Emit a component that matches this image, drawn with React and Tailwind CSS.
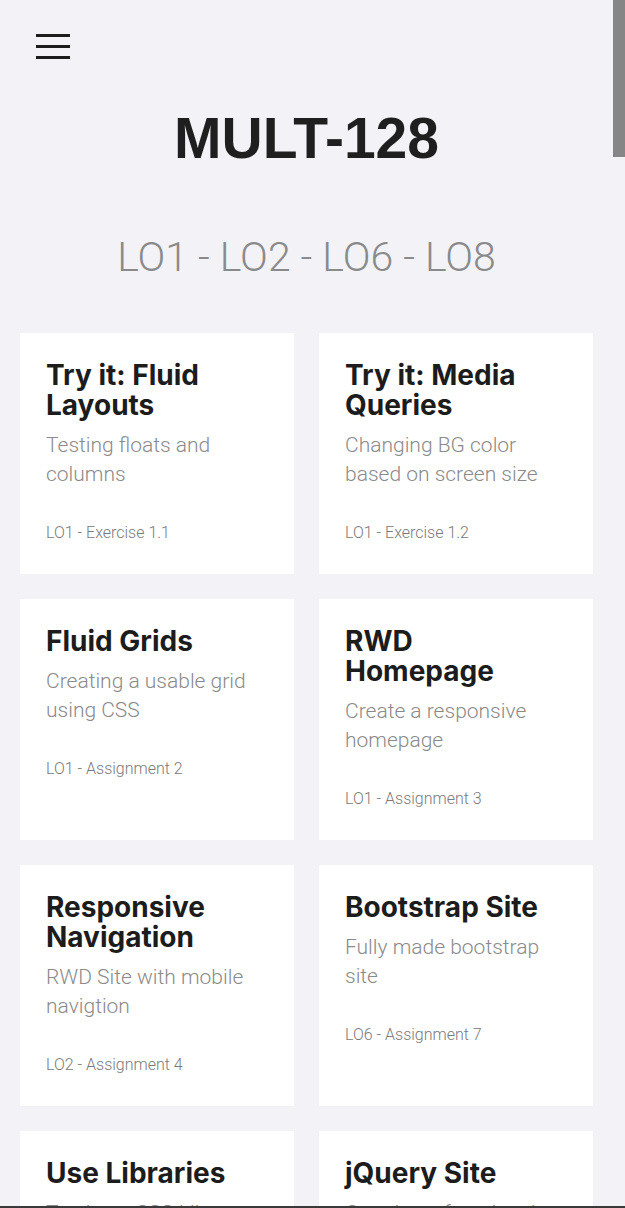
import React from "react";

const cards = [
  { t: "Try it: Fluid Layouts", d: "Testing floats and columns", l: "LO1 - Exercise 1.1" },
  { t: "Try it: Media Queries", d: "Changing BG color based on screen size", l: "LO1 - Exercise 1.2" },
  { t: "Fluid Grids", d: "Creating a usable grid using CSS", l: "LO1 - Assignment 2" },
  { t: "RWD Homepage", d: "Create a responsive homepage", l: "LO1 - Assignment 3" },
  { t: "Responsive Navigation", d: "RWD Site with mobile navigtion", l: "LO2 - Assignment 4" },
  { t: "Bootstrap Site", d: "Fully made bootstrap site", l: "LO6 - Assignment 7" },
  { t: "Use Libraries", d: "Testing a CSS Library", l: "LO6 - Assignment 8" },
  { t: "jQuery Site", d: "Creating a functional site", l: "LO8 - Assignment 9" },
];

function Card({ t, d, l }) {
  return (
    <div className="bg-white pl-[26px] pr-[28px] pt-[27px] pb-[30px] flex flex-col">
      <h2 className="font-['Inter',sans-serif] font-bold text-[28px] leading-[30px] text-[#1c1c1c]">{t}</h2>
      <p className="mt-[11px] font-['Roboto',sans-serif] font-light text-[21px] leading-[29px] text-[#8a8a8a]">{d}</p>
      <p className="mt-[33px] font-['Roboto',sans-serif] font-light text-[16px] leading-[22px] text-[#7a7a7a]">{l}</p>
    </div>
  );
}

export default function App() {
  return (
    <div className="h-[1208px] overflow-hidden bg-[#f2f2f7] flex relative">
      <div className="w-[613px] shrink-0">
        <div className="pt-[34px] pl-[36px]">
          <div className="flex flex-col gap-[8px] w-[34px]">
            <span className="block h-[3px] bg-[#1c1c1c]" />
            <span className="block h-[3px] bg-[#1c1c1c]" />
            <span className="block h-[3px] bg-[#1c1c1c]" />
          </div>
        </div>
        <h1 className="mt-[51px] text-center font-['Liberation_Sans',Arial,sans-serif] font-bold text-[57px] leading-[57px] text-[#1f1f1f]">
          MULT-128
        </h1>
        <p className="mt-[70px] text-center font-['Roboto',sans-serif] font-light text-[41px] leading-[41px] text-[#8a8a8a]">
          LO1 - LO2 - LO6 - LO8
        </p>
        <div className="mt-[55px] px-[20px] grid grid-cols-2 gap-[25px]">
          {cards.map((c) => (
            <Card key={c.t} {...c} />
          ))}
        </div>
      </div>
      <div className="w-[12px] shrink-0">
        <div className="h-[157px] bg-[#868686]" />
      </div>
      <div className="absolute left-0 right-0 bottom-0 h-[2px] bg-[#3a3a3a]" />
    </div>
  );
}
